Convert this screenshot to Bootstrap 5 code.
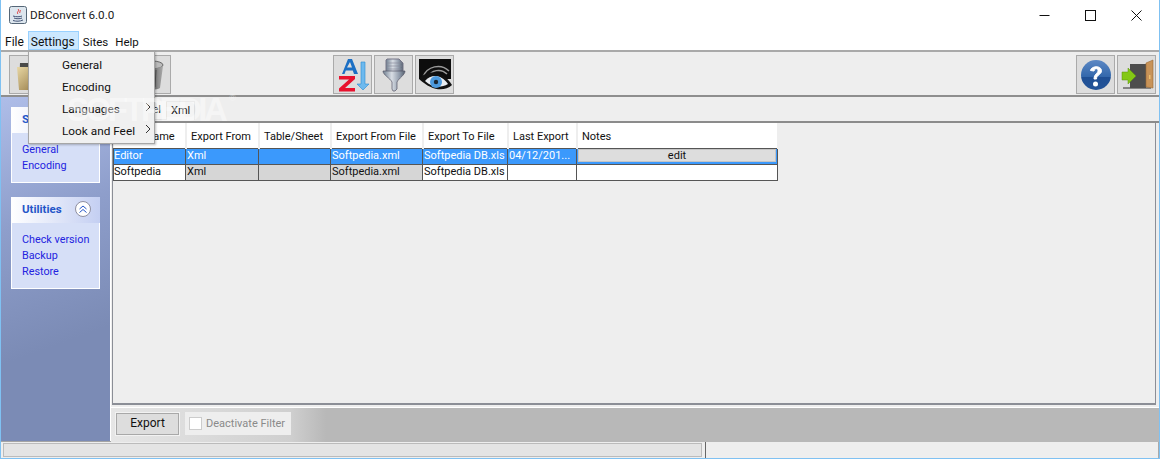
<!DOCTYPE html>
<html lang="en">
<head>
<meta charset="utf-8">
<title>DBConvert 6.0.0</title>
<link rel="stylesheet" href="https://cdn.jsdelivr.net/npm/bootstrap@5.3.0/dist/css/bootstrap.min.css">
<style>
html,body{height:100%;margin:0;overflow:hidden}
body{font-family:Roboto,"Noto Sans",sans-serif;font-size:12px;line-height:16px;color:#111;background:#eee}
.appwin{position:relative;width:1160px;height:459px;border:solid #7fc1f2;border-width:0 1px 1px 1px;background:#eee;overflow:hidden}
.titlebar{height:30px;background:#fff;padding-left:8px;font-size:12px}
.titlebar .ttl{margin-left:3px;color:#222;font-size:11.700px}
.winbtns{margin-left:auto}
.winbtn{width:46px;height:30px}
.menubar{height:20px;background:#fff;font-size:12px}
.mitem{padding:0 3px;height:19px;line-height:20px;border:1px solid transparent;margin-right:0;margin-top:1px}
.mitem.act{background:#cce8ff;border-color:#99d1ff;padding:0 3px 0 2px;width:51px;white-space:nowrap;overflow:hidden}
.mitem.nar{font-size:11.500px;padding-right:2px}
.toolbar{height:47px;border-top:2px solid #a9a9a9;border-bottom:2px solid #8e8e8e;background:#eee;padding:3px 3px 0 8px;gap:2px}
.tbtn{width:39px;height:39px;background:#ddd;border:1px solid #aaa;padding:0}
.tspace{width:158px}
.tpush{margin-left:auto}
.mainrow{height:344px}
.sidepane{width:109px;background:linear-gradient(160deg,#aebde8 0%,#8e9ecb 35%,#7b8bb5 70%);padding:10px 10px 0 10px}
.tpanel{margin-bottom:14px;border:1px solid #fff;background:#d6dff7}
.tphead{height:26px;background:linear-gradient(90deg,#fff,#c4cff2);color:#2456c8;font-weight:700;padding:0 9px 2px 11px;font-size:11.500px;margin:-1px -1px 0 -1px}
.tpbody{padding:9px 0 7px 10px;color:#2323e0;font-size:10.800px}
.p1{height:76px}
.p2{height:92px}
.chev{margin-left:auto}
.work{flex:1;min-width:0;background:#eee;border-left:1px solid #fff}
.tabstrip{height:26px;padding:4px 0 0 0;background:#eee;border-bottom:2px solid #8b8b8b}
.tabx{width:55px;height:19px;line-height:17px;background:#f4f4f4;padding-right:5px;overflow:hidden;font-size:11px;text-align:right;border-bottom:1px solid #ddd}
.taby{height:19px;padding:0 4px;background:#f4f4f4;border:1px solid #ddd;border-bottom:0;line-height:18px;font-size:11px}
.tframe{height:282px;margin:0 3px 0 1px;border:solid #8b8e96;border-width:0 1px 2px 1px;background:#eee}
.grid{table-layout:fixed;width:665px;border-collapse:collapse;font-size:11px;margin:0}
.grid th{background:#fff;font-weight:400;height:25px;padding:3px 4px 0 4.500px;border-right:2px solid #eee;white-space:nowrap;overflow:hidden;vertical-align:middle}
.grid td{height:16px;padding:0 1px 1px;border:1px solid #555;white-space:nowrap;overflow:hidden;background:#fff;line-height:13px;vertical-align:middle}
.grid td:first-child{padding-left:0}
.grid td.gy{background:#d6d6d6}
.grid tr.sel td{background:#3b99fc;color:#fff;border-color:#555}
.editcell{display:block;background:#ddd;color:#111;text-align:center;border:1px solid #c4c4c4;height:13px;line-height:11px}
.c1{width:72px}.c2{width:73px}.c3{width:72px}.c4{width:92px}.c5{width:85px}.c6{width:69px}.c7{width:201px}
.bottombar{height:35px;margin-top:2px;background:linear-gradient(90deg,#e6e6e6 0,#cfcfcf 180px,#b8b8b8 215px);border-top:1px solid #fff;padding:5px 0 0 5px;gap:6px}
.expbtn{width:63px;height:22px;background:#ddd;border:1px solid #a8a8a8;outline:1px solid #f2f2f2;font-size:12px;line-height:19px;text-align:center}
.deact{height:23px;background:#eee;padding:0 6px 0 4px;color:#8a8a8a;font-size:11px;gap:4px;margin-top:-1px}
.cbx{width:13px;height:13px;background:#fff;border:1px solid #ccc}
.statusbar{height:18px;border-top:1px solid #a4a4a4;background:#eee}
.slbar{width:699px;height:14px;margin:1px 0 0 2px;background:#e4e4e4;border:1px solid #bbb}
.srbar{margin-left:3px;flex:1;height:17px;border-left:1px solid #666;border-right:1px solid #aaa}
.popup{position:absolute;left:27px;top:51px;width:127px;height:93px;background:#f0f0f0;border:1px solid #a6a6a6;box-shadow:1px 1px 2px rgba(0,0,0,.25);font-size:11.800px;z-index:5}
.pitem{height:22px;line-height:23px;padding-left:33px;position:relative}
.pitem:first-child{margin-top:2px}
.arrow{position:absolute;left:116px;top:4px}
.wmark{position:absolute;left:66px;top:92px;font:700 33px/36px "Liberation Sans",sans-serif;color:rgba(255,255,255,.45);z-index:6;letter-spacing:-3.500px;pointer-events:none;white-space:nowrap}
.wmark sup{font-size:9px;top:-2.200em;font-weight:400;letter-spacing:0;margin-left:5px}
</style>
</head>
<body>
<div class="appwin">
  <div class="titlebar d-flex align-items-center">
    <svg width="18" height="18" viewBox="0 0 18 18"><rect x=".5" y=".5" width="17" height="17" rx="2" fill="#dde6ee" stroke="#567"/><path d="M9 3c2 2-2 3 0 5M11 4c1 1-1 2 0 3" fill="none" stroke="#d33" stroke-width="1"/><path d="M4 10c3 1 7 1 9 0M5 12c2 1 6 1 8 0M4 14.500c3 1 7 1 10-.5" fill="none" stroke="#457" stroke-width="1"/></svg>
    <span class="ttl">DBConvert 6.0.0</span>
    <div class="winbtns d-flex">
      <div class="winbtn d-flex align-items-center justify-content-center"><svg width="11" height="11" viewBox="0 0 11 11"><path d="M.5 5.500h10" stroke="#111"/></svg></div>
      <div class="winbtn d-flex align-items-center justify-content-center"><svg width="11" height="11" viewBox="0 0 11 11"><rect x=".5" y=".5" width="10" height="10" fill="none" stroke="#111"/></svg></div>
      <div class="winbtn d-flex align-items-center justify-content-center"><svg width="11" height="11" viewBox="0 0 11 11"><path d="M.5.500l10 10M10.500.500l-10 10" stroke="#111" stroke-width="1"/></svg></div>
    </div>
  </div>
  <div class="menubar d-flex">
    <div class="mitem">File</div><div class="mitem act">Settings</div><div class="mitem nar">Sites</div><div class="mitem nar">Help</div>
  </div>
  <div class="toolbar d-flex">
    <div class="tbtn d-flex align-items-center justify-content-center"><svg width="30" height="32" viewBox="0 0 30 32"><defs><linearGradient id="fo" x1="0" y1="0" x2="1" y2="1"><stop offset="0" stop-color="#e8d7a4"/><stop offset="1" stop-color="#8f7440"/></linearGradient></defs><path d="M6 4h18l3 4v22H5z" fill="#4a4a48"/><path d="M3 8h24v23H5z" fill="url(#fo)"/></svg></div>
    <div class="tbtn"></div>
    <div class="tbtn"></div>
    <div class="tbtn d-flex align-items-center justify-content-center"><svg width="30" height="32" viewBox="0 0 30 32"><defs><linearGradient id="tr" x1="0" y1="0" x2="1" y2="0"><stop offset="0" stop-color="#9a9a9a"/><stop offset=".6" stop-color="#777"/><stop offset="1" stop-color="#aaa"/></linearGradient></defs><ellipse cx="15" cy="6" rx="11" ry="4" fill="#bbb" stroke="#666"/><path d="M4 7l3 22c3 2 13 2 16 0l3-22c-4 3-18 3-22 0z" fill="url(#tr)"/><path d="M11 11l1 17M15 11v18M19 11l-1 17" stroke="#555"/></svg></div>
    <div class="tspace"></div>
    <div class="tbtn d-flex align-items-center justify-content-center"><svg width="36" height="36" viewBox="0 0 36 36"><path d="M7 17L13 2h4l6 15h-4l-1.200-3.500h-7L9.500 17zm5-6.500h5L15 5z" fill="#1c6fc4"/><path d="M4 19h16v3L10 31h10v3.500H4v-3l10-9H4z" fill="#e8112d"/><path d="M26 5h4v22h4l-6 6-6-6h4z" fill="#6db9ee" stroke="#2a8ad0" stroke-width=".6"/></svg></div>
    <div class="tbtn d-flex align-items-center justify-content-center"><svg width="30" height="36" viewBox="0 0 30 36"><defs><linearGradient id="fn" x1="0" y1="0" x2="1" y2="0"><stop offset="0" stop-color="#6f7f90"/><stop offset=".4" stop-color="#d8dde4"/><stop offset=".75" stop-color="#8f9aaa"/><stop offset="1" stop-color="#55606e"/></linearGradient></defs><path d="M8 2h12l4 4v9H7V3z" fill="url(#fn)" stroke="#778"/><path d="M4 14h22c0 4-6 7-8 11v7l-2 2h-2l-1-2v-7c-2-4-9-7-9-11z" fill="url(#fn)" stroke="#556" stroke-width=".7"/><path d="M8 6h15M8 9h15M8 12h15" stroke="#889" stroke-width=".6"/></svg></div>
    <div class="tbtn d-flex align-items-center justify-content-center"><svg width="36" height="34" viewBox="0 0 36 34"><rect x="2" y="1" width="32" height="20" fill="#0d0d0d"/><path d="M6 19C10 8 24 5 32 13M11 19C14 12 24 10 30 16" fill="none" stroke="#9a9a9a" stroke-width="1.500"/><path d="M2 21c8-10 24-9 33 6-8 7-20 6-33-6z" fill="#111"/><path d="M8 23c6-7 16-7 23 3-7 4-16 4-23-3z" fill="#e9edf2"/><circle cx="19" cy="24" r="6" fill="#4c9ade"/><circle cx="19" cy="24" r="2.200" fill="#1b2733"/></svg></div>
    <div class="tbtn tpush d-flex align-items-center justify-content-center"><svg width="32" height="32" viewBox="0 0 32 32"><defs><linearGradient id="hp" x1="0" y1="0" x2="0" y2="1"><stop offset="0" stop-color="#5c88c4"/><stop offset=".55" stop-color="#3468ac"/><stop offset=".56" stop-color="#1f4f94"/><stop offset="1" stop-color="#235398"/></linearGradient></defs><circle cx="16" cy="16" r="15" fill="url(#hp)"/><path d="M10.500 11.500C11 7 21 6 21.500 11.500c.4 4-5 4-5 8.500h-2.500c0-5 4-5.500 4-8.500 0-2.500-3.500-2.500-4 .5z" fill="#fff" stroke="#fff"/><circle cx="15.500" cy="25" r="2.500" fill="#fff"/></svg></div>
    <div class="tbtn d-flex align-items-center justify-content-center"><svg width="36" height="36" viewBox="0 0 36 36"><path d="M4 31h28" stroke="#666" stroke-width="1.500"/><rect x="11" y="7" width="16" height="24" fill="#4d4d4d"/><path d="M27 6l7-3v28l-7-1z" fill="#c89358" stroke="#9a6a34" stroke-width=".6"/><rect x="30" y="18" width="1.500" height="4" fill="#eec06e"/><path d="M3 15h6v-4l8 8-8 8v-4H3z" fill="#84c814" stroke="#5b9208" stroke-width=".5"/></svg></div>
  </div>
  <div class="mainrow d-flex">
    <div class="sidepane">
      <div class="tpanel p1">
        <div class="tphead d-flex align-items-center">Settings</div>
        <div class="tpbody">General<br>Encoding</div>
      </div>
      <div class="tpanel p2">
        <div class="tphead d-flex align-items-center">Utilities
          <svg class="chev" width="16" height="16" viewBox="0 0 16 16"><circle cx="8" cy="8" r="7.500" fill="#fff" stroke="#8f8f9f"/><path d="M4.500 8L8 5l3.500 3M4.500 11.500L8 8.500l3.500 3" fill="none" stroke="#2456c8"/></svg>
        </div>
        <div class="tpbody">Check version<br>Backup<br>Restore</div>
      </div>
    </div>
    <div class="work">
      <div class="tabstrip d-flex">
        <div class="tabx">Excel</div><div class="taby">Xml</div>
      </div>
      <div class="tframe">
        <table class="grid">
          <colgroup><col class="c1"><col class="c2"><col class="c3"><col class="c4"><col class="c5"><col class="c6"><col class="c7"></colgroup>
          <thead><tr><th>Filter Name</th><th>Export From</th><th>Table/Sheet</th><th>Export From File</th><th>Export To File</th><th>Last Export</th><th>Notes</th></tr></thead>
          <tbody>
            <tr class="sel"><td>Editor</td><td>Xml</td><td></td><td>Softpedia.xml</td><td>Softpedia DB.xls</td><td>04/12/201...</td><td><span class="editcell">edit</span></td></tr>
            <tr><td>Softpedia</td><td class="gy">Xml</td><td class="gy"></td><td class="gy">Softpedia.xml</td><td>Softpedia DB.xls</td><td></td><td></td></tr>
          </tbody>
        </table>
      </div>
      <div class="bottombar d-flex">
        <div class="expbtn">Export</div>
        <div class="deact d-flex align-items-center"><span class="cbx"></span>Deactivate Filter</div>
      </div>
    </div>
  </div>
  <div class="statusbar d-flex">
    <div class="slbar"></div><div class="srbar"></div>
  </div>
  <div class="popup">
    <div class="pitem">General</div>
    <div class="pitem">Encoding</div>
    <div class="pitem">Languages<svg class="arrow" width="6" height="10" viewBox="0 0 6 10"><path d="M1 1l4 4-4 4" fill="none" stroke="#333"/></svg></div>
    <div class="pitem">Look and Feel<svg class="arrow" width="6" height="10" viewBox="0 0 6 10"><path d="M1 1l4 4-4 4" fill="none" stroke="#333"/></svg></div>
  </div>
  <div class="wmark">SOFTPEDIA<sup>®</sup></div>
</div>
</body>
</html>
